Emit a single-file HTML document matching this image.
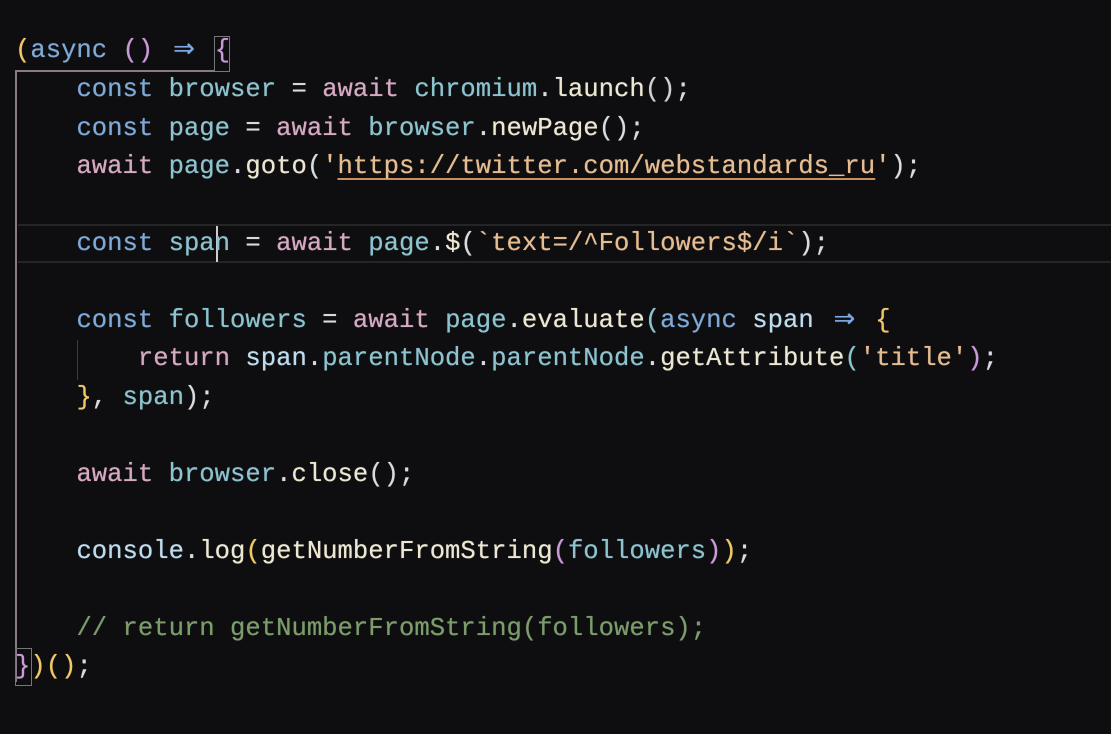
<!DOCTYPE html>
<html><head><meta charset="utf-8"><style>
html,body{margin:0;padding:0;background:#0e0e10;width:1111px;height:734px;overflow:hidden}
.l{position:absolute;left:15px;height:38px;line-height:38px;font-family:"Liberation Mono","DejaVu Sans Mono",monospace;font-size:25.6px;white-space:pre;color:#d8dce0;letter-spacing:0;text-shadow:0 0 0.6px currentColor}
.k{color:#7fa9d6}.v{color:#8cc3cf}.a{color:#d6a9c2}.m{color:#ece6d2}.s{color:#e6bd92}.y{color:#f0c868}.p{color:#c89ad8}.c{color:#7c9c6c}.w{color:#bfdcef}.pu{color:#d0d0d0}
.o{color:#7fa9e6;display:inline-block;width:30.8px;text-align:center;font-family:"DejaVu Sans",sans-serif;font-size:26px;line-height:0}
.u{text-decoration:underline;text-decoration-color:#c89060;text-underline-offset:5px}
</style></head><body>
<div style="position:absolute;left:15px;top:70px;width:2px;height:612px;background:#8a7a88"></div>
<div style="position:absolute;left:15px;top:70px;width:200px;height:2px;background:#8a7a88"></div>
<div style="position:absolute;left:214px;top:36px;width:14px;height:34px;border:1px solid #777"></div>
<div style="position:absolute;left:15px;top:648px;width:15px;height:36px;border:1px solid #777"></div>
<div style="position:absolute;left:18px;top:224px;width:1093px;height:2px;background:#252528"></div>
<div style="position:absolute;left:18px;top:261px;width:1093px;height:2px;background:#252528"></div>
<div style="position:absolute;left:77px;top:340px;width:1px;height:40px;background:#3a3a3e"></div>
<div style="position:absolute;left:216px;top:226px;width:2px;height:36px;background:#ccc"></div>
<div class="l" style="top:32px"><span class="y">(</span><span class="k">async</span> <span class="p">()</span> <span class="o">⇒</span> <span class="p">{</span></div>
<div class="l" style="top:71px">    <span class="k">const</span> <span class="v">browser</span> = <span class="a">await</span> <span class="v">chromium</span>.<span class="m">launch</span><span class="pu">()</span>;</div>
<div class="l" style="top:110px">    <span class="k">const</span> <span class="v">page</span> = <span class="a">await</span> <span class="v">browser</span>.<span class="m">newPage</span>();</div>
<div class="l" style="top:148px">    <span class="a">await</span> <span class="v">page</span>.<span class="m">goto</span>(<span class="s">'<span class="u">https://twitter.com/webstandards_ru</span>'</span>);</div>
<div class="l" style="top:225px">    <span class="k">const</span> <span class="v">span</span> = <span class="a">await</span> <span class="v">page</span>.<span class="m">$</span>(<span class="s">`text=/^Followers$/i`</span>);</div>
<div class="l" style="top:302px">    <span class="k">const</span> <span class="v">followers</span> = <span class="a">await</span> <span class="v">page</span>.<span class="m">evaluate</span><span class="v">(</span><span class="k">async</span> <span class="w">span</span> <span class="o">⇒</span> <span class="y">{</span></div>
<div class="l" style="top:340px">        <span class="a">return</span> <span class="w">span</span>.<span class="v">parentNode</span>.<span class="v">parentNode</span>.<span class="m">getAttribute</span><span class="v">(</span><span class="s">'title'</span><span class="p">)</span>;</div>
<div class="l" style="top:379px">    <span class="y">}</span>, <span class="v">span</span>);</div>
<div class="l" style="top:456px">    <span class="a">await</span> <span class="v">browser</span>.<span class="m">close</span>();</div>
<div class="l" style="top:533px">    <span class="w">console</span>.<span class="m">log</span><span class="y">(</span><span class="m">getNumberFromString</span><span class="p">(</span><span class="v">followers</span><span class="p">)</span><span class="y">)</span>;</div>
<div class="l" style="top:610px">    <span class="c">// return getNumberFromString(followers);</span></div>
<div class="l" style="top:648px"><span class="p">}</span><span class="y">)()</span>;</div>
</body></html>
